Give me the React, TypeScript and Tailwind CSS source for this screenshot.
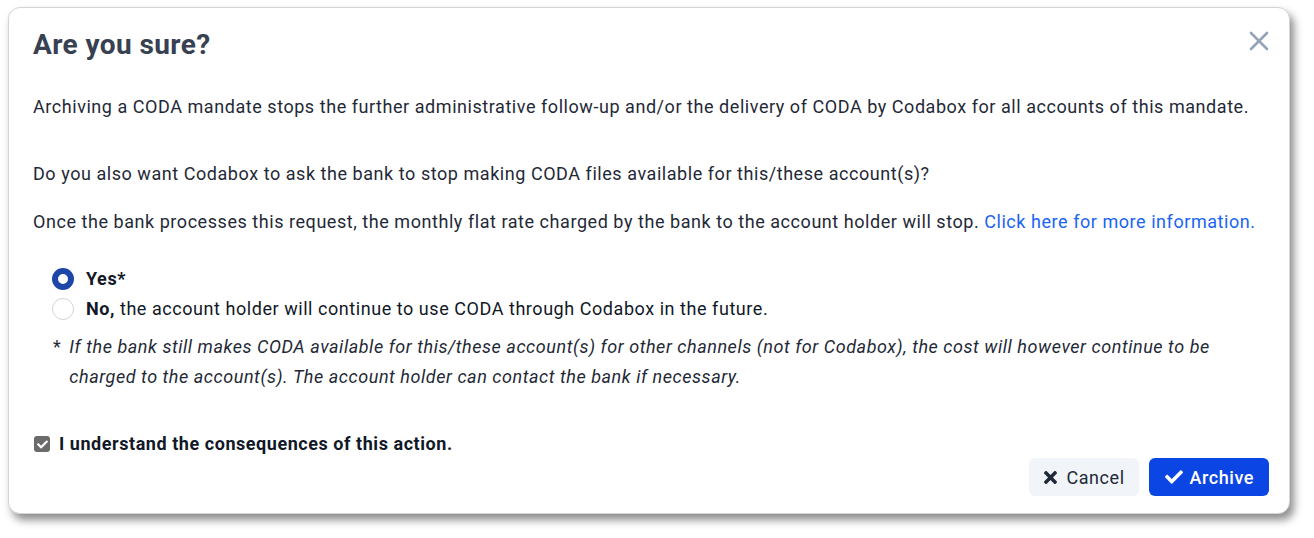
import { FaTimes, FaCheck } from 'react-icons/fa';

export default function App() {
  return (
    <div className="w-[1314px] h-[538px] bg-white font-['Roboto',sans-serif] text-[#1f2937]">
      <div className="ml-[8px] pt-[7px]">
        <div className="w-[1282px] h-[507px] rounded-xl bg-white border border-[#d4d4d4] shadow-[4px_6px_8px_rgba(0,0,0,0.45)] flex flex-col px-6">
          {/* Header */}
          <div className="flex items-start justify-between pt-[20px]">
            <h2 className="text-[28px] leading-[34px] font-bold tracking-[0.4px] text-[#374151]">Are you sure?</h2>
            <button className="mt-[1px] mr-[-6px] text-[#94a3b8]">
              <svg width="24" height="24" viewBox="0 0 24 24" fill="none" stroke="currentColor" strokeWidth="2.6" strokeLinecap="round">
                <line x1="4" y1="4" x2="20" y2="20" />
                <line x1="20" y1="4" x2="4" y2="20" />
              </svg>
            </button>
          </div>

          {/* Body */}
          <div className="text-[18px] leading-[24px] tracking-[0.55px] mt-[33px]">
            <p>Archiving a CODA mandate stops the further administrative follow-up and/or the delivery of CODA by Codabox for all accounts of this mandate.</p>
            <p className="mt-[43px]">Do you also want Codabox to ask the bank to stop making CODA files available for this/these account(s)?</p>
            <p className="mt-[24px]">
              Once the bank processes this request, the monthly flat rate charged by the bank to the account holder will stop.{' '}
              <a className="text-[#1a64f5]">Click here for more information.</a>
            </p>

            <div className="mt-[33px] ml-[19px] flex flex-col gap-[6px]">
              <label className="flex items-center gap-[12px]">
                <span className="w-[22px] h-[22px] rounded-full border-[6px] border-[#1e46a8] bg-white" />
                <span className="font-bold text-[#111827]">Yes*</span>
              </label>
              <label className="flex items-center gap-[12px]">
                <span className="w-[22px] h-[22px] rounded-full border border-[#d1d5db] bg-white" />
                <span className="text-[#111827]"><b>No,</b> the account holder will continue to use CODA through Codabox in the future.</span>
              </label>
            </div>

            <div className="mt-[11px] ml-[20px] flex gap-[8px] italic leading-[30px]">
              <span className="not-italic">*</span>
              <span>If the bank still makes CODA available for this/these account(s) for other channels (not for Codabox), the cost will however continue to be charged to the account(s). The account holder can contact the bank if necessary.</span>
            </div>

            <label className="mt-[40px] ml-[1px] flex items-center gap-[9px]">
              <span className="w-[16px] h-[16px] rounded-[3px] bg-[#6b6b6b] flex items-center justify-center text-white">
                <FaCheck size={11} />
              </span>
              <span className="font-bold text-[#111827]">I understand the consequences of this action.</span>
            </label>
          </div>

          {/* Footer */}
          <div className="flex justify-end gap-[10px] mt-[2px] mr-[-4px]">
            <button className="h-[38px] pl-[15px] pr-[14px] rounded-md bg-[#f1f5f9] text-[#1f2937] text-[18px] tracking-[0.55px] flex items-center gap-[9px]">
              <FaTimes className="w-[13px] h-[19px]" />
              Cancel
            </button>
            <button className="h-[38px] pl-[16px] pr-[15px] rounded-md bg-[#0b45e4] text-white text-[18px] tracking-[0.55px] font-medium flex items-center gap-[7px]">
              <FaCheck size={18} />
              Archive
            </button>
          </div>
        </div>
      </div>
    </div>
  );
}
